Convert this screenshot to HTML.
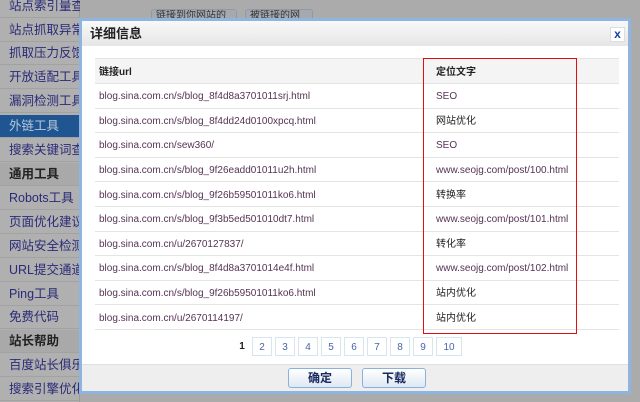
<!DOCTYPE html>
<html><head><meta charset="utf-8"><style>
*{margin:0;padding:0;box-sizing:border-box}
body{width:640px;height:402px;overflow:hidden;background:#ababab;font-family:"Liberation Sans","Noto Sans CJK SC",sans-serif;position:relative}
.side{position:absolute;left:0;top:0;width:80px;height:402px;background:#b0b0b0;border-right:1px solid #999}
.si{position:absolute;left:0;width:80px;height:23px;line-height:23px;padding-left:9px;font-size:12.5px;color:#2a2a78;white-space:nowrap;overflow:hidden;border-bottom:1px solid #a2a2a2}
.si.b{font-weight:bold;color:#222;background:#a9a9a9}
.si.a{background:#1f5590;color:#b8c8dc}
.tab{position:absolute;top:9px;height:12px;border:1px solid #8e9aa6;border-radius:3px 3px 0 0;background:#a6aab0;font-size:10px;color:#333;padding:0 4px;line-height:12px;overflow:hidden}
.modal{position:absolute;left:79px;top:18px;width:552px;height:376px;background:#fff;border:3px solid #8fb4e0}
.title{height:25px;background:linear-gradient(#f8f8f8,#e6e6e6);font-size:13px;font-weight:bold;color:#222;line-height:25px;padding-left:8px}
.x{position:absolute;right:3px;top:6px;width:15px;height:15px;border:1px solid #ddd;background:#fff;color:#1a3ca8;font-weight:bold;font-size:12px;line-height:13px;text-align:center}
table{position:absolute;left:13px;top:37px;width:524px;border-collapse:collapse;table-layout:fixed;font-size:10px;color:#553355}
td{height:24.6px;border-bottom:1px solid #e4e4e4;padding:3px 0 0 4px;white-space:nowrap;line-height:14px;vertical-align:middle;overflow:hidden}
tr.h td{background:#f4f4f4;color:#222;font-weight:bold;border-top:1px solid #e4e4e4;height:25px}
td.c{color:#222;padding-left:13px}
td.r{padding-left:13px}
.red{position:absolute;left:341px;top:37px;width:154px;height:276px;border:1px solid #e01010}
.pg{position:absolute;top:316px;left:154px;font-size:10px}
.pg span{position:absolute;top:0;height:19px;line-height:19px;text-align:center;border:1px solid #d8e4ee;color:#4466aa}
.foot{position:absolute;left:0;bottom:0;width:546px;height:27px;background:#eee;border-top:1px solid #e0e0e0}
.btn{position:absolute;top:3px;width:64px;height:20px;border:1px solid #8ab0dc;border-radius:3px;background:linear-gradient(#fff,#dfe8f2);font-size:12px;font-weight:bold;color:#1a2a60;text-align:center;line-height:18px}
</style></head><body>
<div class="side">
<div class="si" style="top:-5px">站点索引量查询</div>
<div class="si" style="top:19px">站点抓取异常查询</div>
<div class="si" style="top:42px">抓取压力反馈工具</div>
<div class="si" style="top:66px">开放适配工具</div>
<div class="si" style="top:90px">漏洞检测工具</div>
<div class="si a" style="top:115px">外链工具</div>
<div class="si" style="top:139px">搜索关键词查询</div>
<div class="si b" style="top:163px">通用工具</div>
<div class="si" style="top:187px">Robots工具</div>
<div class="si" style="top:211px">页面优化建议</div>
<div class="si" style="top:235px">网站安全检测</div>
<div class="si" style="top:259px">URL提交通道</div>
<div class="si" style="top:283px">Ping工具</div>
<div class="si" style="top:306px">免费代码</div>
<div class="si b" style="top:330px">站长帮助</div>
<div class="si" style="top:354px">百度站长俱乐部</div>
<div class="si" style="top:378px">搜索引擎优化指南</div>
</div>
<div class="tab" style="left:151px;width:86px">链接到你网站的域</div>
<div class="tab" style="left:245px;width:68px">被链接的网页</div>
<div class="modal">
<div class="title">详细信息</div>
<div class="x">x</div>
<table>
<colgroup><col style="width:328px"><col style="width:196px"></colgroup>
<tr class="h"><td>链接url</td><td class="c">定位文字</td></tr>
<tr><td>blog.sina.com.cn/s/blog_8f4d8a3701011srj.html</td><td class="r">SEO</td></tr>
<tr><td>blog.sina.com.cn/s/blog_8f4dd24d0100xpcq.html</td><td class="c">网站优化</td></tr>
<tr><td>blog.sina.com.cn/sew360/</td><td class="r">SEO</td></tr>
<tr><td>blog.sina.com.cn/s/blog_9f26eadd01011u2h.html</td><td class="r">www.seojg.com/post/100.html</td></tr>
<tr><td>blog.sina.com.cn/s/blog_9f26b59501011ko6.html</td><td class="c">转换率</td></tr>
<tr><td>blog.sina.com.cn/s/blog_9f3b5ed501010dt7.html</td><td class="r">www.seojg.com/post/101.html</td></tr>
<tr><td>blog.sina.com.cn/u/2670127837/</td><td class="c">转化率</td></tr>
<tr><td>blog.sina.com.cn/s/blog_8f4d8a3701014e4f.html</td><td class="r">www.seojg.com/post/102.html</td></tr>
<tr><td>blog.sina.com.cn/s/blog_9f26b59501011ko6.html</td><td class="c">站内优化</td></tr>
<tr><td>blog.sina.com.cn/u/2670114197/</td><td class="c">站内优化</td></tr>
</table>
<div class="red"></div>
<div class="pg">
<span style="left:0;width:12px;border:none;color:#222;font-weight:bold">1</span>
<span style="left:16px;width:20px">2</span>
<span style="left:39px;width:20px">3</span>
<span style="left:62px;width:20px">4</span>
<span style="left:85px;width:20px">5</span>
<span style="left:108px;width:20px">6</span>
<span style="left:131px;width:20px">7</span>
<span style="left:154px;width:20px">8</span>
<span style="left:177px;width:20px">9</span>
<span style="left:200px;width:26px">10</span>
</div>
<div class="foot">
<div class="btn" style="left:206px">确定</div>
<div class="btn" style="left:280px">下载</div>
</div>
</div>
</body></html>
